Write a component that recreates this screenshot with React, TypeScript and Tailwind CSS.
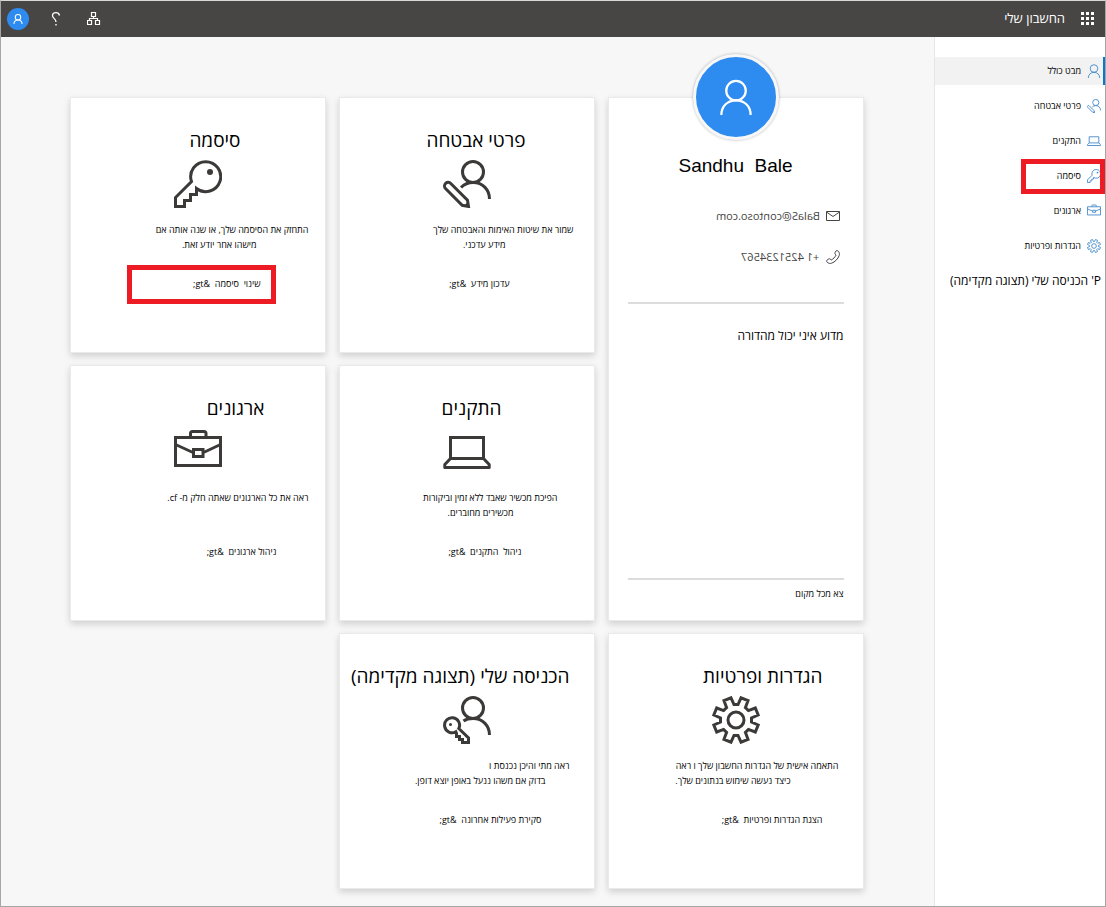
import type { ReactNode } from "react";

type IconProps = { className?: string; sw?: number };

function PersonIcon({ className, sw = 3 }: IconProps) {
  return (
    <svg viewBox="0 0 48 48" className={className} fill="none" stroke="currentColor" strokeWidth={sw} aria-hidden="true">
      <circle cx="24" cy="15.5" r="13" />
      <path d="M4.500 48C4.500 36 13 28.500 24 28.500S43.500 36 43.500 48" />
    </svg>
  );
}

function SecurityIcon({ className, sw = 3 }: IconProps) {
  return (
    <svg viewBox="0 0 48 48" className={className} fill="none" stroke="currentColor" strokeWidth={sw} aria-hidden="true">
      <circle cx="30" cy="12" r="10.500" />
      <path d="M18 27.500C21 24.500 25 22.500 30 22.500C40 22.500 46.500 30 46.500 39" />
      <path d="M2.500 28.500A3.600 3.600 0 0 1 7.800 23.500L24.500 40.200L25.500 46.500L19.200 45.300Z" />
      <path d="M21 46L25 41.500L26.500 47.500Z" fill="currentColor" stroke="none" />
    </svg>
  );
}

function SigninIcon({ className, sw = 3 }: IconProps) {
  return (
    <svg viewBox="0 0 48 48" className={className} fill="none" stroke="currentColor" strokeWidth={sw} aria-hidden="true">
      <circle cx="30" cy="12" r="10.500" />
      <path d="M20.500 25C23 23.200 26 22.500 30 22.500C40 22.500 46.500 30 46.500 39" />
      <path d="M15.800 32.500L25.500 42V46.500H19.500V43.500H16.500V40.500H13.500V37.300L12.800 35.700A7.500 7.500 0 1 1 15.800 32.500Z" />
      <circle cx="7.500" cy="28.500" r="1.500" fill="currentColor" stroke="none" />
    </svg>
  );
}

function KeyIcon({ className, sw = 3 }: IconProps) {
  return (
    <svg viewBox="0 0 48 48" className={className} fill="none" stroke="currentColor" strokeWidth={sw} aria-hidden="true">
      <path d="M17.500 21.500A15 15 0 1 1 22.500 28.500V34.500H16.500V40.500H10.500V46.500H1.500V37.500L17.500 21.500Z" />
      <circle cx="36" cy="12" r="3" fill="currentColor" stroke="none" />
    </svg>
  );
}

function BriefcaseIcon({ className, sw = 3 }: IconProps) {
  return (
    <svg viewBox="0 0 48 48" className={className} fill="none" stroke="currentColor" strokeWidth={sw} aria-hidden="true">
      <path d="M1.500 9.500H46.500V37.500H1.500Z" />
      <path d="M16.500 9.500V5.500A2 2 0 0 1 18.500 3.500H30A2 2 0 0 1 32 5.500V9.500" />
      <path d="M1.500 16.500L19 24.500M46.500 16.500L29.500 24.500M19.500 21.500H29V28.500H19.500Z" />
    </svg>
  );
}

function LaptopIcon({ className, sw = 3 }: IconProps) {
  return (
    <svg viewBox="0 0 48 48" className={className} fill="none" stroke="currentColor" strokeWidth={sw} strokeLinejoin="round" aria-hidden="true">
      <path d="M7.500 9.500H40.500V30.500H7.500Z" strokeLinejoin="miter" />
      <path d="M7.500 30.500L1.800 36.500V39.500H46.200V36.500L40.500 30.500" />
    </svg>
  );
}

function GearIcon({ className, sw = 3 }: IconProps) {
  return (
    <svg viewBox="0 0 48 48" className={className} fill="none" stroke="currentColor" strokeWidth={sw} aria-hidden="true">
      <path d="M19 1.800L22 8.500H26L29 1.800L36 4.700L33.400 11.600L36.400 14.600L43.300 12L46.200 19L39.500 22V26L46.200 29L43.300 36L36.400 33.400L33.400 36.400L36 43.300L29 46.200L26 39.500H22L19 46.200L12 43.300L14.600 36.400L11.600 33.400L4.700 36L1.800 29L8.500 26V22L1.800 19L4.700 12L11.600 14.600L14.600 11.600L12 4.700Z" />
      <circle cx="24" cy="24" r="8" />
    </svg>
  );
}

type NavItem = { label: string; icon: ReactNode; active?: boolean; marked?: boolean };

const navIcon = "size-3.5 shrink-0 text-[#3f87c9]";

const navItems: NavItem[] = [
  { label: "מבט כולל", icon: <PersonIcon className={navIcon} />, active: true },
  { label: "פרטי אבטחה", icon: <SecurityIcon className={navIcon} /> },
  { label: "התקנים", icon: <LaptopIcon className={navIcon} /> },
  { label: "סיסמה", icon: <KeyIcon className={navIcon} />, marked: true },
  { label: "ארגונים", icon: <BriefcaseIcon className={navIcon} /> },
  { label: "הגדרות ופרטיות", icon: <GearIcon className={navIcon} /> },
];

type CardProps = {
  title: string;
  titlePad: string;
  icon: ReactNode;
  lines: { text: string; pad: string }[];
  link: string;
  linkPad: string;
  marked?: boolean;
};

const cardIcon = "size-12 text-[#3b3a39]";
const surface = "border border-[#eaeaea] bg-white shadow-[0_3px_7px_rgba(0,0,0,0.16)]";

const cards: CardProps[] = [
  {
    title: "פרטי אבטחה",
    titlePad: "ps-17",
    icon: <SecurityIcon className={cardIcon} />,
    lines: [
      { text: "שמור את שיטות האימות והאבטחה שלך", pad: "ps-5" },
      { text: "מידע עדכני.", pad: "ps-22" },
    ],
    link: "עדכון מידע \u00a0&gt;",
    linkPad: "ps-21",
  },
  {
    title: "סיסמה",
    titlePad: "ps-21",
    icon: <KeyIcon className={cardIcon} />,
    lines: [
      { text: "התחזק את הסיסמה שלך, או שנה אותה אם", pad: "ps-4" },
      { text: "מישהו אחר יודע זאת.", pad: "ps-17" },
    ],
    link: "שינוי \u00a0סיסמה \u00a0&gt;",
    linkPad: "ps-16",
    marked: true,
  },
  {
    title: "התקנים",
    titlePad: "ps-23",
    icon: <LaptopIcon className={cardIcon} />,
    lines: [
      { text: "הפיכת מכשיר שאבד ללא זמין וביקורות", pad: "ps-9" },
      { text: "מכשירים מחוברים.", pad: "ps-20" },
    ],
    link: "ניהול \u00a0התקנים \u00a0&gt;",
    linkPad: "ps-18",
  },
  {
    title: "ארגונים",
    titlePad: "ps-15",
    icon: <BriefcaseIcon className={cardIcon} />,
    lines: [{ text: "ראה את כל הארגונים שאתה חלק מ- cf.", pad: "ps-4" }],
    link: "ניהול ארגונים \u00a0&gt;",
    linkPad: "ps-12",
  },
  {
    title: "הגדרות ופרטיות",
    titlePad: "ps-10",
    icon: <GearIcon className={cardIcon} />,
    lines: [
      { text: "התאמה אישית של הגדרות החשבון שלך ו ראה", pad: "ps-6" },
      { text: "כיצד נעשה שימוש בנתונים שלך.", pad: "ps-18" },
    ],
    link: "הצגת הגדרות ופרטיות \u00a0&gt;",
    linkPad: "ps-10",
  },
  {
    title: "הכניסה שלי (תצוגה מקדימה)",
    titlePad: "ps-6",
    icon: <SigninIcon className={cardIcon} />,
    lines: [
      { text: "ראה מתי והיכן נכנסת ו", pad: "ps-6" },
      { text: "בדוק אם משהו ננעל באופן יוצא דופן.", pad: "ps-12" },
    ],
    link: "סקירת פעילות אחרונה \u00a0&gt;",
    linkPad: "ps-13",
  },
];

function Card({ title, titlePad, icon, lines, link, linkPad, marked }: CardProps) {
  return (
    <section className={`relative flex h-64 flex-col pt-7 whitespace-nowrap ${surface}`}>
      <h2 className={`text-[19px] leading-7 ${titlePad}`}>{title}</h2>
      <div className="mt-1.5 flex justify-center">{icon}</div>
      <div className="mt-3.5 h-[30px] text-[9px] leading-[15px]">
        {lines.map((line) => (
          <p key={line.text} className={line.pad}>
            {line.text}
          </p>
        ))}
      </div>
      <a href="#" className={`mt-5 block text-[9px] leading-6 ${linkPad}`}>
        {link}
      </a>
      {marked && (
        <span className="pointer-events-none absolute top-[167px] left-14 h-[39px] w-[149px] border-5 border-[#ed1c24]" />
      )}
    </section>
  );
}

export default function App() {
  return (
    <div
      dir="rtl"
      className="flex min-h-screen flex-col border border-[#a6a6a6] border-t-[#d8d8d8] bg-[#f7f7f7] font-['Open_Sans','Liberation_Sans',sans-serif] text-black"
    >
      <header className="flex h-9 items-center bg-[#484644] ps-2.5 pe-1.5 text-white">
        <button aria-label="תפריט" className="p-0">
          <svg viewBox="0 0 14 14" className="size-3.5" fill="currentColor" aria-hidden="true">
            <path d="M0 0h3v3H0zM5 0h3v3H5zM10 0h3v3h-3zM0 5h3v3H0zM5 5h3v3H5zM10 5h3v3h-3zM0 10h3v3H0zM5 10h3v3H5zM10 10h3v3h-3z" />
          </svg>
        </button>
        <h1 className="ms-4 text-[13px]">החשבון שלי</h1>
        <div className="ms-auto flex items-center">
          <button aria-label="ארגון">
            <svg viewBox="0 0 14 14" className="size-3.5" fill="none" stroke="currentColor" aria-hidden="true">
              <path d="M4.500 .500H8.500V4.500H4.500ZM.500 8.500H4.500V12.500H.500ZM8.500 8.500H12.500V12.500H8.500ZM6.500 4.500V6.500M2.500 8.500V6.500H10.500V8.500" strokeWidth="1.200" />
            </svg>
          </button>
          <button aria-label="עזרה" className="ms-6">
            <svg viewBox="0 0 14 14" className="size-3.5" fill="none" stroke="currentColor" strokeWidth="1.300" aria-hidden="true">
              <path d="M10.500 3.500C10 1.500 8.500 .700 7 .700C5 .700 3.500 2 3.500 3.800C3.500 6.300 7 6.600 7 10" />
              <path d="M6.300 12H7.700V13.400H6.300Z" fill="currentColor" stroke="none" />
            </svg>
          </button>
          <button aria-label="חשבון" className="ms-5 flex size-[22px] items-center justify-center rounded-full bg-[#2e8bf0]">
            <PersonIcon className="size-2.5" sw={5} />
          </button>
        </div>
      </header>

      <div className="flex flex-1">
        <aside className="w-[171px] shrink-0 border-e border-[#e6e6e6] bg-white pt-5 whitespace-nowrap">
          <nav className="flex flex-col gap-[7px]">
            {navItems.map((item) => (
              <a
                key={item.label}
                href="#"
                className={`relative flex h-7 items-center gap-1.5 text-[9px] ${
                  item.active ? "border-s-2 border-[#0078d4] bg-[#f2f2f2] ps-0.5" : "ps-1"
                }`}
              >
                {item.icon}
                {item.label}
                {item.marked && (
                  <span className="pointer-events-none absolute -top-[3px] right-0 h-[35px] w-[84px] border-5 border-[#ed1c24]" />
                )}
              </a>
            ))}
            <a href="#" className="flex h-7 items-center ps-1 text-[12px]">
              P' הכניסה שלי (תצוגה מקדימה)
            </a>
          </nav>
        </aside>

        <main className="grid flex-1 grid-cols-[repeat(3,256px)] content-start justify-center gap-x-[13px] gap-y-3 ps-0.5 pt-15 pb-4">
          <section className={`relative row-span-2 flex flex-col px-[19px] pt-[54px] ${surface}`}>
            <div className="absolute -top-11 left-1/2 flex size-[86px] -translate-x-1/2 items-center justify-center rounded-full border-3 border-[#f7f7f7] bg-[#2e8bf0] text-white shadow-[0_0_3px_rgba(0,0,0,0.3)]">
              <PersonIcon className="size-9" sw={3} />
            </div>
            <h2 dir="ltr" className="text-center font-['Liberation_Sans',sans-serif] text-[19px] leading-7">
              Sandhu&nbsp; Bale
            </h2>
            <div className="mt-6 flex flex-col gap-[17px] ps-1 text-[11px] leading-6 text-[#444]">
              <p className="flex items-center gap-1.5">
                <svg viewBox="0 0 14 10" className="h-2.5 w-3.5" fill="none" stroke="currentColor" aria-hidden="true">
                  <path d="M.500 .500H13.500V9.500H.500ZM.500 1L7 5.500L13.500 1" />
                </svg>
                <span dir="ltr" className="-scale-x-100">BalaS@contoso.com</span>
              </p>
              <p className="flex items-center gap-1.5">
                <svg viewBox="0 0 14 14" className="size-3.5" fill="none" stroke="currentColor" aria-hidden="true">
                  <path d="M10 1C10.500 .400 11.500 .400 12.200 1.200C13.500 2.600 13.700 4 13.200 5.500C12 9 9 12 5.500 13.200C4 13.700 2.600 13.500 1.200 12.200C.400 11.500 .400 10.800 1 10.200L2.600 9C3.200 8.600 3.800 8.700 4.300 9.200L5.200 10C7.200 9 9 7.200 10 5.200L9.300 4.200C8.800 3.700 8.700 3.100 9.100 2.500Z" />
                </svg>
                <span dir="ltr" className="-scale-x-100">+1 4251234567</span>
              </p>
            </div>
            <hr className="mt-[33px] border-t-2 border-[#dcdcdc]" />
            <p className="mt-5 text-[12px] leading-6">מדוע איני יכול מהדורה</p>
            <hr className="mt-auto border-t-2 border-[#dcdcdc]" />
            <a href="#" className="mt-1 mb-4 block text-[9px] leading-5">
              צא מכל מקום
            </a>
          </section>
          {cards.map((card) => (
            <Card key={card.title} {...card} />
          ))}
        </main>
      </div>
    </div>
  );
}
